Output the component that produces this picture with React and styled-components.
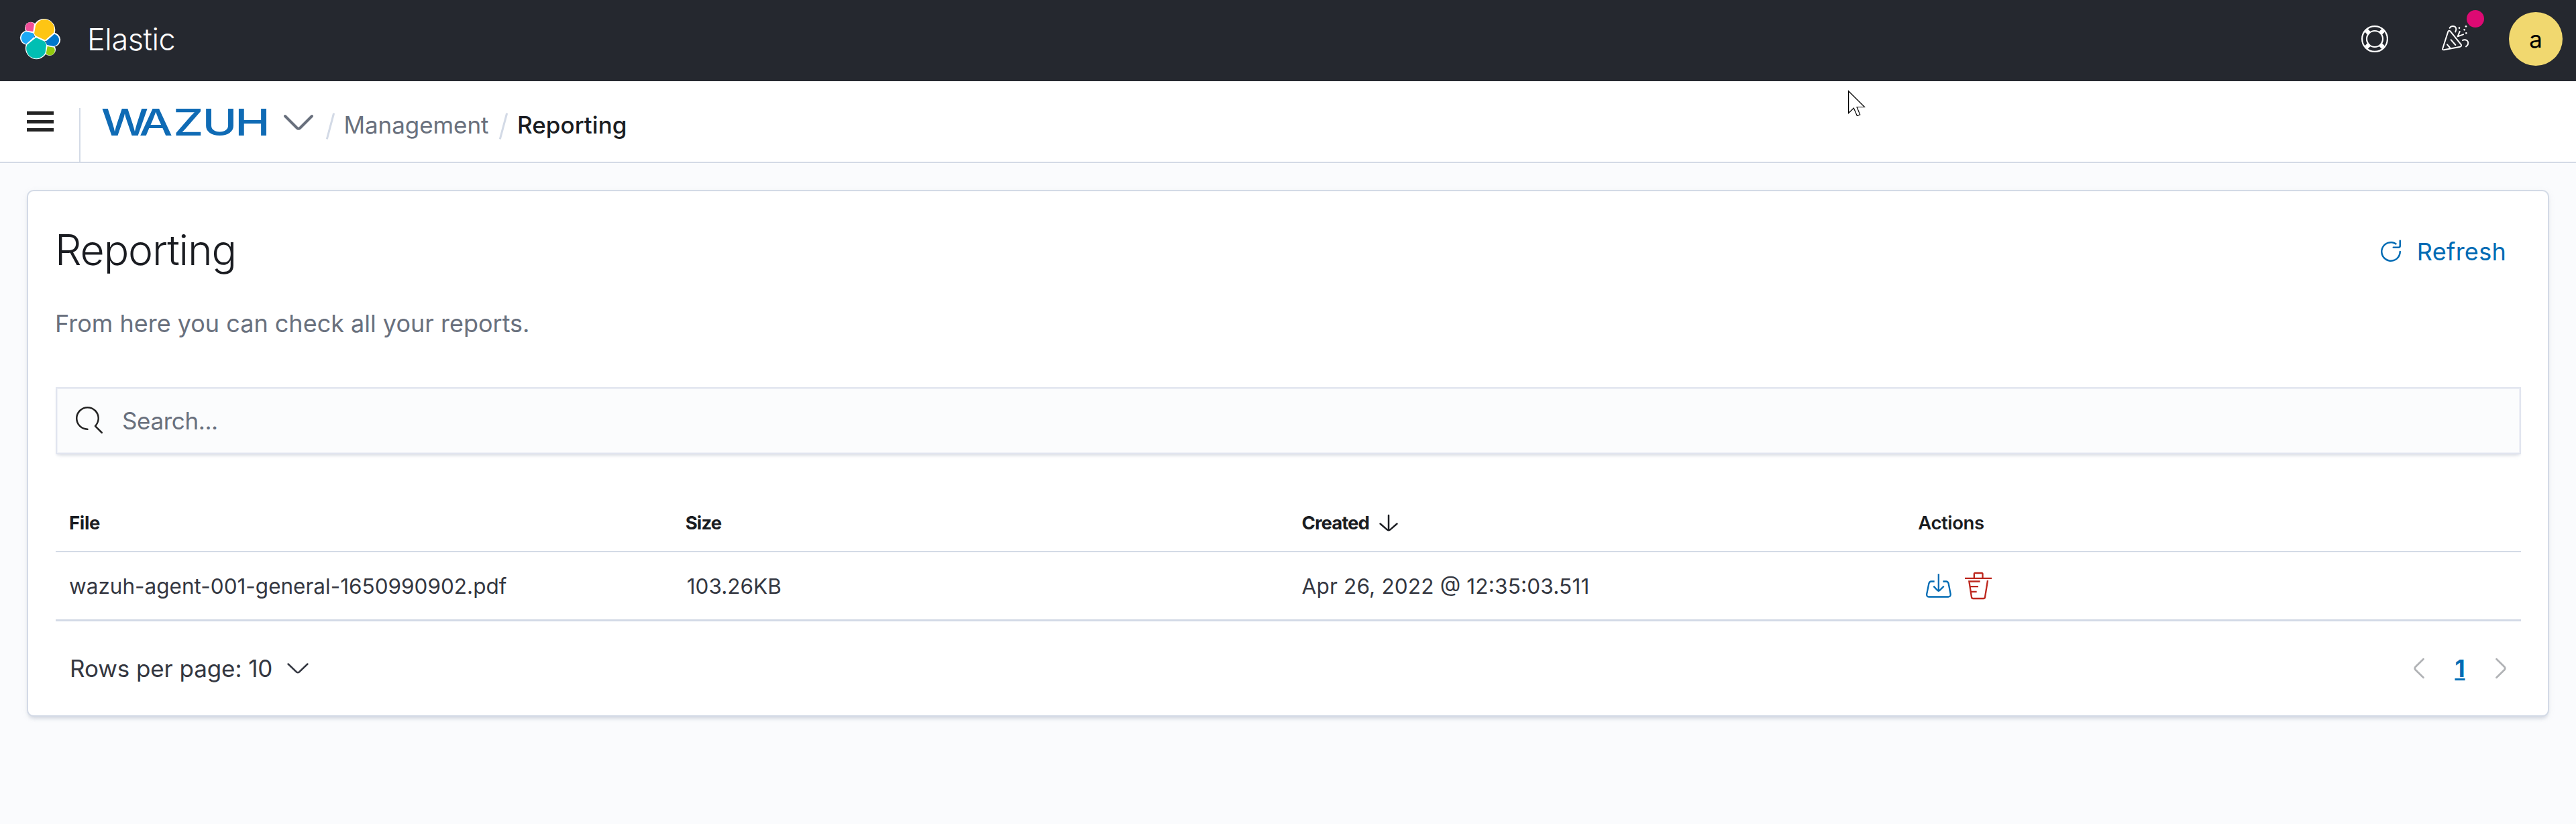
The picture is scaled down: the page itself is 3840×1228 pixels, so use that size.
import React from 'react';
import styled, { createGlobalStyle } from 'styled-components';

const Global = createGlobalStyle`
  * { box-sizing: border-box; }
  body { margin: 0; background: #fafbfd; font-family: Inter, "Open Sans", sans-serif; font-size: 35px; color: #343741; font-feature-settings: "calt", "kern", "liga"; }
`;

const Page = styled.div`
  position: relative;
  display: flex;
  flex-direction: column;
  height: 1228px;
  background: #fafbfd;
`;

const TopBar = styled.header`
  display: flex;
  align-items: center;
  height: 121px;
  padding: 0 20px 5px 30px;
  background: #25282f;
  color: #fff;
`;

const Brand = styled.span`
  margin-left: 40px;
  font-size: 45px;
  font-weight: 300;
  letter-spacing: -0.45px;
`;

const TopActions = styled.div`
  display: flex;
  align-items: center;
  margin-left: auto;
`;

const Icon = styled.svg`
  display: block;
  flex: none;
  width: ${(p) => p.$w}px;
  height: ${(p) => p.$h || p.$w}px;
  overflow: visible;
`;

const News = styled.div`
  position: relative;
  margin: 0 60px 0 80px;
`;

const Dot = styled.span`
  position: absolute;
  top: -23px;
  left: 37px;
  width: 26px;
  height: 26px;
  border-radius: 50%;
  background: #dd0a73;
`;

const Avatar = styled.div`
  display: flex;
  align-items: center;
  justify-content: center;
  width: 80px;
  height: 80px;
  border-radius: 50%;
  background: #f1d86f;
  color: #000;
  font-size: 35px;
`;

const NavBar = styled.nav`
  display: flex;
  align-items: center;
  height: 122px;
  padding: 9px 0 0 40px;
  background: #fff;
  border-bottom: 2px solid #d3dae6;
`;

const Burger = styled.div`
  display: flex;
  flex-direction: column;
  justify-content: space-between;
  width: 40px;
  height: 30px;
  margin-bottom: 9px;
`;

const BurgerLine = styled.span`
  height: 5px;
  background: #222;
`;

const NavDivider = styled.span`
  align-self: flex-end;
  width: 2px;
  height: 80px;
  margin: 0 30px 0 38px;
  background: #d3dae6;
`;

const Wordmark = styled.svg`
  width: 250px;
  height: 44px;
  margin-bottom: 7px;
  overflow: visible;
`;

const NavChevron = styled.div`
  margin: 0 18px 7px 23px;
`;

const Slash = styled.span`
  width: 2.5px;
  height: 40px;
  margin: 4px ${(p) => p.$after}px 0 ${(p) => p.$before}px;
  background: #d3dae6;
  transform: rotate(15deg);
`;

const Crumb = styled.span`
  color: ${(p) => (p.$current ? '#1a1c21' : '#69707d')};
  font-weight: ${(p) => (p.$current ? 500 : 400)};
  letter-spacing: ${(p) => (p.$current ? 0.06 : -0.08)}px;
`;

const Main = styled.main`
  padding: 40px;
`;

const Panel = styled.section`
  display: flex;
  flex-direction: column;
  height: 785px;
  padding: 40px 40px 0 41px;
  background: #fff;
  border: 2px solid #d3dae6;
  border-radius: 10px;
  box-shadow: 0 5px 5px -2px rgba(152, 162, 179, 0.3), 0 2px 12px -4px rgba(152, 162, 179, 0.3);
`;

const PanelHead = styled.div`
  display: flex;
  align-items: center;
  justify-content: space-between;
  height: 93px;
`;

const Title = styled.h1`
  margin: 0 0 0 -1px;
  color: #1a1c21;
  font-size: 62.5px;
  font-weight: 300;
  letter-spacing: -1.2px;
  line-height: 80px;
`;

const Refresh = styled.button`
  display: flex;
  align-items: center;
  gap: 19px;
  margin: 7px 0 0;
  padding: 0 22px 0 0;
  border: 0;
  background: none;
  color: #006bb4;
  font: inherit;
  font-size: 36px;
  letter-spacing: 0.28px;
`;

const Subtitle = styled.p`
  margin: 38px 0 69px -1px;
  color: #69707d;
  font-size: 36px;
  line-height: 52px;
`;

const Search = styled.label`
  display: flex;
  align-items: center;
  flex: none;
  height: 100px;
  padding-left: 28px;
  background: #fbfcfd;
  border: 2px solid #e1e5ef;
  box-shadow: inset 0 0 0 1px #eff1f7, 0 3px 3px -1px rgba(152, 162, 179, 0.2), 0 8px 5px -5px rgba(152, 162, 179, 0.15);
  color: #222;
  & > svg { margin-bottom: 2px; }
`;

const SearchInput = styled.input`
  flex: 1;
  margin-left: 29px;
  padding: 0;
  border: 0;
  outline: 0;
  background: none;
  font: inherit;
  letter-spacing: -0.4px;
  &::placeholder { color: #69707d; opacity: 1; }
`;

const Row = styled.div`
  display: grid;
  grid-template-columns: repeat(4, 1fr);
  align-items: center;
  height: ${(p) => (p.$head ? 86 : 103)}px;
  margin-top: ${(p) => (p.$head ? 60 : 0)}px;
  border-bottom: ${(p) => (p.$head ? 2 : 3)}px solid #d3dae6;
`;

const HeadCell = styled.div`
  display: flex;
  align-items: center;
  gap: 15px;
  padding-left: 20px;
  color: #1a1c21;
  font-size: 27.5px;
  font-weight: ${(p) => p.$weight || 700};
  letter-spacing: ${(p) => p.$ls}px;
`;

const Cell = styled.div`
  display: flex;
  align-items: center;
  padding-left: ${(p) => p.$pad || 20}px;
  font-size: 31.5px;
  letter-spacing: ${(p) => p.$ls || 0}px;
`;

const ActionCell = styled.div`
  display: flex;
  align-items: center;
  gap: 19px;
  padding-left: 31px;
`;

const Footer = styled.div`
  display: flex;
  align-items: center;
  justify-content: space-between;
  height: 139px;
  padding: 0 22px 0 21px;
`;

const PerPage = styled.div`
  display: flex;
  align-items: center;
  gap: 22px;
  letter-spacing: -0.08px;
`;

const Pager = styled.div`
  display: flex;
  align-items: center;
  gap: 45px;
`;

const PageNumber = styled.a`
  width: 16px;
  text-align: center;
  color: #006bb4;
  font-weight: 700;
  text-decoration: underline;
  text-decoration-thickness: 3px;
  text-underline-offset: 2px;
`;

const Cursor = styled.div`
  position: absolute;
  top: 135px;
  left: 2755px;
`;

const ElasticLogo = () => (
  <Icon $w={60} viewBox="90 84 180 180">
    <g fill="#fff">
      <circle cx="197" cy="134" r="50" />
      <circle cx="163" cy="215" r="49.5" />
      <circle cx="121" cy="169" r="31.5" />
      <circle cx="239" cy="178" r="31.5" />
      <circle cx="138" cy="125" r="27" />
      <circle cx="222" cy="222" r="27" />
      <path d="M150 120L210 230L160 200Z" />
    </g>
    <path fill="#fec514" d="M153 150L159 115A43 43 0 1 1 240 146L202 179L159 160Z" />
    <path fill="#00bfb3" d="M121 200L161 168L201 186L207 200L203 234A44 44 0 1 1 121 200Z" />
    <path fill="#1ba9f5" d="M118 142L147 148L155 163L117 197A28 28 0 0 1 118 142Z" />
    <path fill="#0077cc" d="M243 152A28 28 0 0 1 240 207L210 201L205 185Z" />
    <path fill="#f04e98" d="M153 107L148 141L119 137A21 21 0 0 1 153 107Z" />
    <path fill="#93c90e" d="M212 207L241 212A21 21 0 0 1 206 239Z" />
  </Icon>
);

const HelpIcon = () => (
  <Icon $w={40} viewBox="120 114 120 120" fill="none" stroke="#fff">
    <circle cx="180" cy="174" r="56.7" strokeWidth="6.5" />
    <circle cx="180" cy="174" r="36" strokeWidth="6.5" />
    <path strokeWidth="19" d="M155 149L142 136M205 149L218 136M155 199L142 212M205 199L218 212" />
  </Icon>
);

const CheerIcon = () => (
  <Icon $w={40} viewBox="480 114 120 120" fill="none" stroke="#fff" strokeWidth="6" strokeLinecap="round" strokeLinejoin="round">
    <path d="M508 141Q512 134 518 140L566 199Q570 206 562 209L490 223Q481 224 484 216Z" />
    <path d="M521 178L541 201M504 199L516 213M515 125C522 114 538 115 543 125C546 132 544 137 541 142M573 180C582 175 593 178 597 187C599 195 596 203 588 208M560 141L551 163L576 154" />
    <g fill="#fff" stroke="none">
      <circle cx="558" cy="125" r="4" />
      <circle cx="581" cy="133" r="4" />
      <circle cx="588" cy="118" r="4" />
      <circle cx="589" cy="148" r="4" />
    </g>
  </Icon>
);

const RefreshIcon = () => (
  <Icon $w={40} viewBox="0 0 16 16" fill="currentColor">
    <path d="M11.228 2.942a.5.5 0 11-.538.842A5 5 0 1013 8a.5.5 0 111 0 6 6 0 11-2.772-5.058zM14 1.5v3A1.5 1.5 0 0112.5 6h-3a.5.5 0 010-1h3a.5.5 0 00.5-.5v-3a.5.5 0 111 0z" />
  </Icon>
);

const SearchIcon = () => (
  <Icon $w={40} viewBox="0 0 16 16" fill="currentColor">
    <path d="M11.271 11.978l3.872 3.873a.502.502 0 00.708 0 .502.502 0 000-.708l-3.565-3.564c2.38-2.747 2.267-6.923-.342-9.532-2.73-2.73-7.17-2.73-9.898 0-2.728 2.729-2.728 7.17 0 9.9a6.955 6.955 0 004.949 2.05.5.5 0 000-1 5.96 5.96 0 01-4.242-1.757 6.01 6.01 0 010-8.486 6.004 6.004 0 018.484 0 6.01 6.01 0 010 8.486.5.5 0 00.034.738z" />
  </Icon>
);

const SortDownIcon = () => (
  <Icon $w={28} $h={26} viewBox="0 0 28 26" fill="none" stroke="#1a1c21" strokeWidth="2.5" strokeLinecap="round">
    <path d="M14 2V24M1.5 14.5L12 23.6Q14 25 16 23.6L26.5 14.5" />
  </Icon>
);

const DownloadIcon = () => (
  <Icon $w={40} viewBox="151 339 120 120" fill="none" stroke="#006bb4" strokeWidth="7">
    <path d="M210.5 346V423M188 401L206 420Q210.5 424 215 420L234 401M192 379.5H178Q169 380 167 389L157.5 436Q156 448 167 448.5H254Q265 448 264 436L255 389Q253 380 244 379.5H230" />
  </Icon>
);

const TrashIcon = () => (
  <Icon $w={40} viewBox="327 339 120 120" fill="none" stroke="#bd271e" strokeWidth="7">
    <path d="M327 365.5H447M368.5 365V346Q368.5 342 373 342H402Q406.5 342 406.5 346V365M395 379.5H346L357 450Q358 456 364 456H410Q416 456 417 450L429 375M349 402.5H387M352 425.5H380" />
  </Icon>
);

const Chevron = ({ w, h, d, color, sw }) => (
  <Icon $w={w} $h={h} viewBox={`0 0 ${w} ${h}`} fill="none" stroke={color} strokeWidth={sw} strokeLinecap="round">
    <path d={d} />
  </Icon>
);

export default function App() {
  return (
    <Page>
      <Global />
      <TopBar>
        <ElasticLogo />
        <Brand>Elastic</Brand>
        <TopActions>
          <HelpIcon />
          <News>
            <CheerIcon />
            <Dot />
          </News>
          <Avatar>a</Avatar>
        </TopActions>
      </TopBar>
      <NavBar>
        <Burger>
          <BurgerLine />
          <BurgerLine />
          <BurgerLine />
        </Burger>
        <NavDivider />
        <Wordmark viewBox="0 0 250 44">
          <text transform="scale(1.28 1)" x="0.5 45 84.5 118.4 156.5" y="42" fontSize="55" fontWeight="500" fill="#0f6bb5">WAZUH</text>
        </Wordmark>
        <NavChevron>
          <Chevron w={44} h={23} color="#69707d" sw={4} d="M2 2L19.5 19.5Q22 22 24.5 19.5L42 2" />
        </NavChevron>
        <Slash $before={6} $after={19} />
        <Crumb>Management</Crumb>
        <Slash $before={20.5} $after={19.5} />
        <Crumb $current>Reporting</Crumb>
      </NavBar>
      <Main>
        <Panel>
          <PanelHead>
            <Title>Reporting</Title>
            <Refresh>
              <RefreshIcon />
              Refresh
            </Refresh>
          </PanelHead>
          <Subtitle>From here you can check all your reports.</Subtitle>
          <Search>
            <SearchIcon />
            <SearchInput placeholder="Search..." />
          </Search>
          <Row $head>
            <HeadCell $ls={-0.33}>File</HeadCell>
            <HeadCell $ls={-0.9}>Size</HeadCell>
            <HeadCell $ls={-0.95}>
              Created
              <SortDownIcon />
            </HeadCell>
            <HeadCell $weight={600} $ls={-0.4}>Actions</HeadCell>
          </Row>
          <Row>
            <Cell>wazuh-agent-001-general-1650990902.pdf</Cell>
            <Cell $pad={22}>103.26KB</Cell>
            <Cell $ls={0.19}>Apr 26, 2022 @ 12:35:03.511</Cell>
            <ActionCell>
              <DownloadIcon />
              <TrashIcon />
            </ActionCell>
          </Row>
          <Footer>
            <PerPage>
              Rows per page: 10
              <Chevron w={32} h={16} color="#343741" sw={2.5} d="M1.5 1.5L14 13.5Q16 15 18 13.5L30.5 1.5" />
            </PerPage>
            <Pager>
              <Chevron w={16} h={30} color="#b1b3b6" sw={2.8} d="M14.5 1.3L2.5 13Q1 15 2.5 17L14.5 28.7" />
              <PageNumber>1</PageNumber>
              <Chevron w={16} h={30} color="#b1b3b6" sw={2.8} d="M1.5 1.3L13.5 13Q15 15 13.5 17L1.5 28.7" />
            </Pager>
          </Footer>
        </Panel>
      </Main>
      <Cursor>
        <Icon $w={26} $h={39} viewBox="0 0 26 39">
          <path fill="#fff" stroke="#000" strokeWidth="1.2" d="M.6 .8V33.5L8.3 26L13.3 37.5L17.7 35.8L13 24.5H24.5Z" />
        </Icon>
      </Cursor>
    </Page>
  );
}
